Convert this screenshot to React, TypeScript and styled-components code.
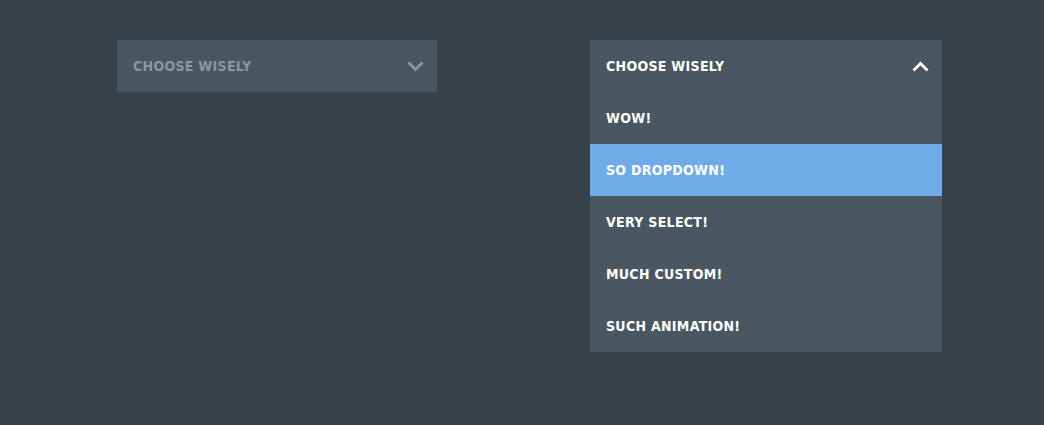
import React from 'react';
import styled, { createGlobalStyle } from 'styled-components';

const GlobalStyle = createGlobalStyle`
  html, body {
    margin: 0;
    background: #38424b;
  }
`;

const Page = styled.div`
  min-height: 425px;
  box-sizing: border-box;
  padding: 40px 0 0 117px;
  display: flex;
  align-items: flex-start;
  gap: 153px;
  font-family: "DejaVu Sans Condensed", "DejaVu Sans", sans-serif;
  font-weight: bold;
  font-size: 14px;
  text-transform: uppercase;
`;

const Select = styled.div<{ $width: number }>`
  width: ${(p) => p.$width}px;
  background: #4a5660;
  display: flex;
  flex-direction: column;
`;

const Row = styled.div<{ $active?: boolean; $muted?: boolean }>`
  height: 52px;
  padding: 0 13px 0 16px;
  display: flex;
  align-items: center;
  justify-content: space-between;
  color: ${(p) => (p.$muted ? '#8d979f' : '#ffffff')};
  background: ${(p) => (p.$active ? '#6eabe8' : 'transparent')};
  letter-spacing: 0.3px;
`;

const Chevron: React.FC<{ up?: boolean; color: string }> = ({ up, color }) => (
  <svg width="17" height="11" viewBox="0 0 17 11">
    <path
      d={up ? 'M1.5 9.5 L8.5 2.5 L15.5 9.5' : 'M1.5 1.5 L8.5 8.5 L15.5 1.5'}
      fill="none"
      stroke={color}
      strokeWidth="2.8"
    />
  </svg>
);

const items = ['Wow!', 'So dropdown!', 'Very select!', 'Much custom!', 'Such animation!'];

const App: React.FC = () => (
  <>
    <GlobalStyle />
    <Page>
      <Select $width={320}>
        <Row $muted>
          <span>Choose wisely</span>
          <Chevron color="#8d979f" />
        </Row>
      </Select>
      <Select $width={352}>
        <Row>
          <span>Choose wisely</span>
          <Chevron up color="#ffffff" />
        </Row>
        {items.map((item, i) => (
          <Row key={item} $active={i === 1}>
            <span>{item}</span>
          </Row>
        ))}
      </Select>
    </Page>
  </>
);

export default App;
